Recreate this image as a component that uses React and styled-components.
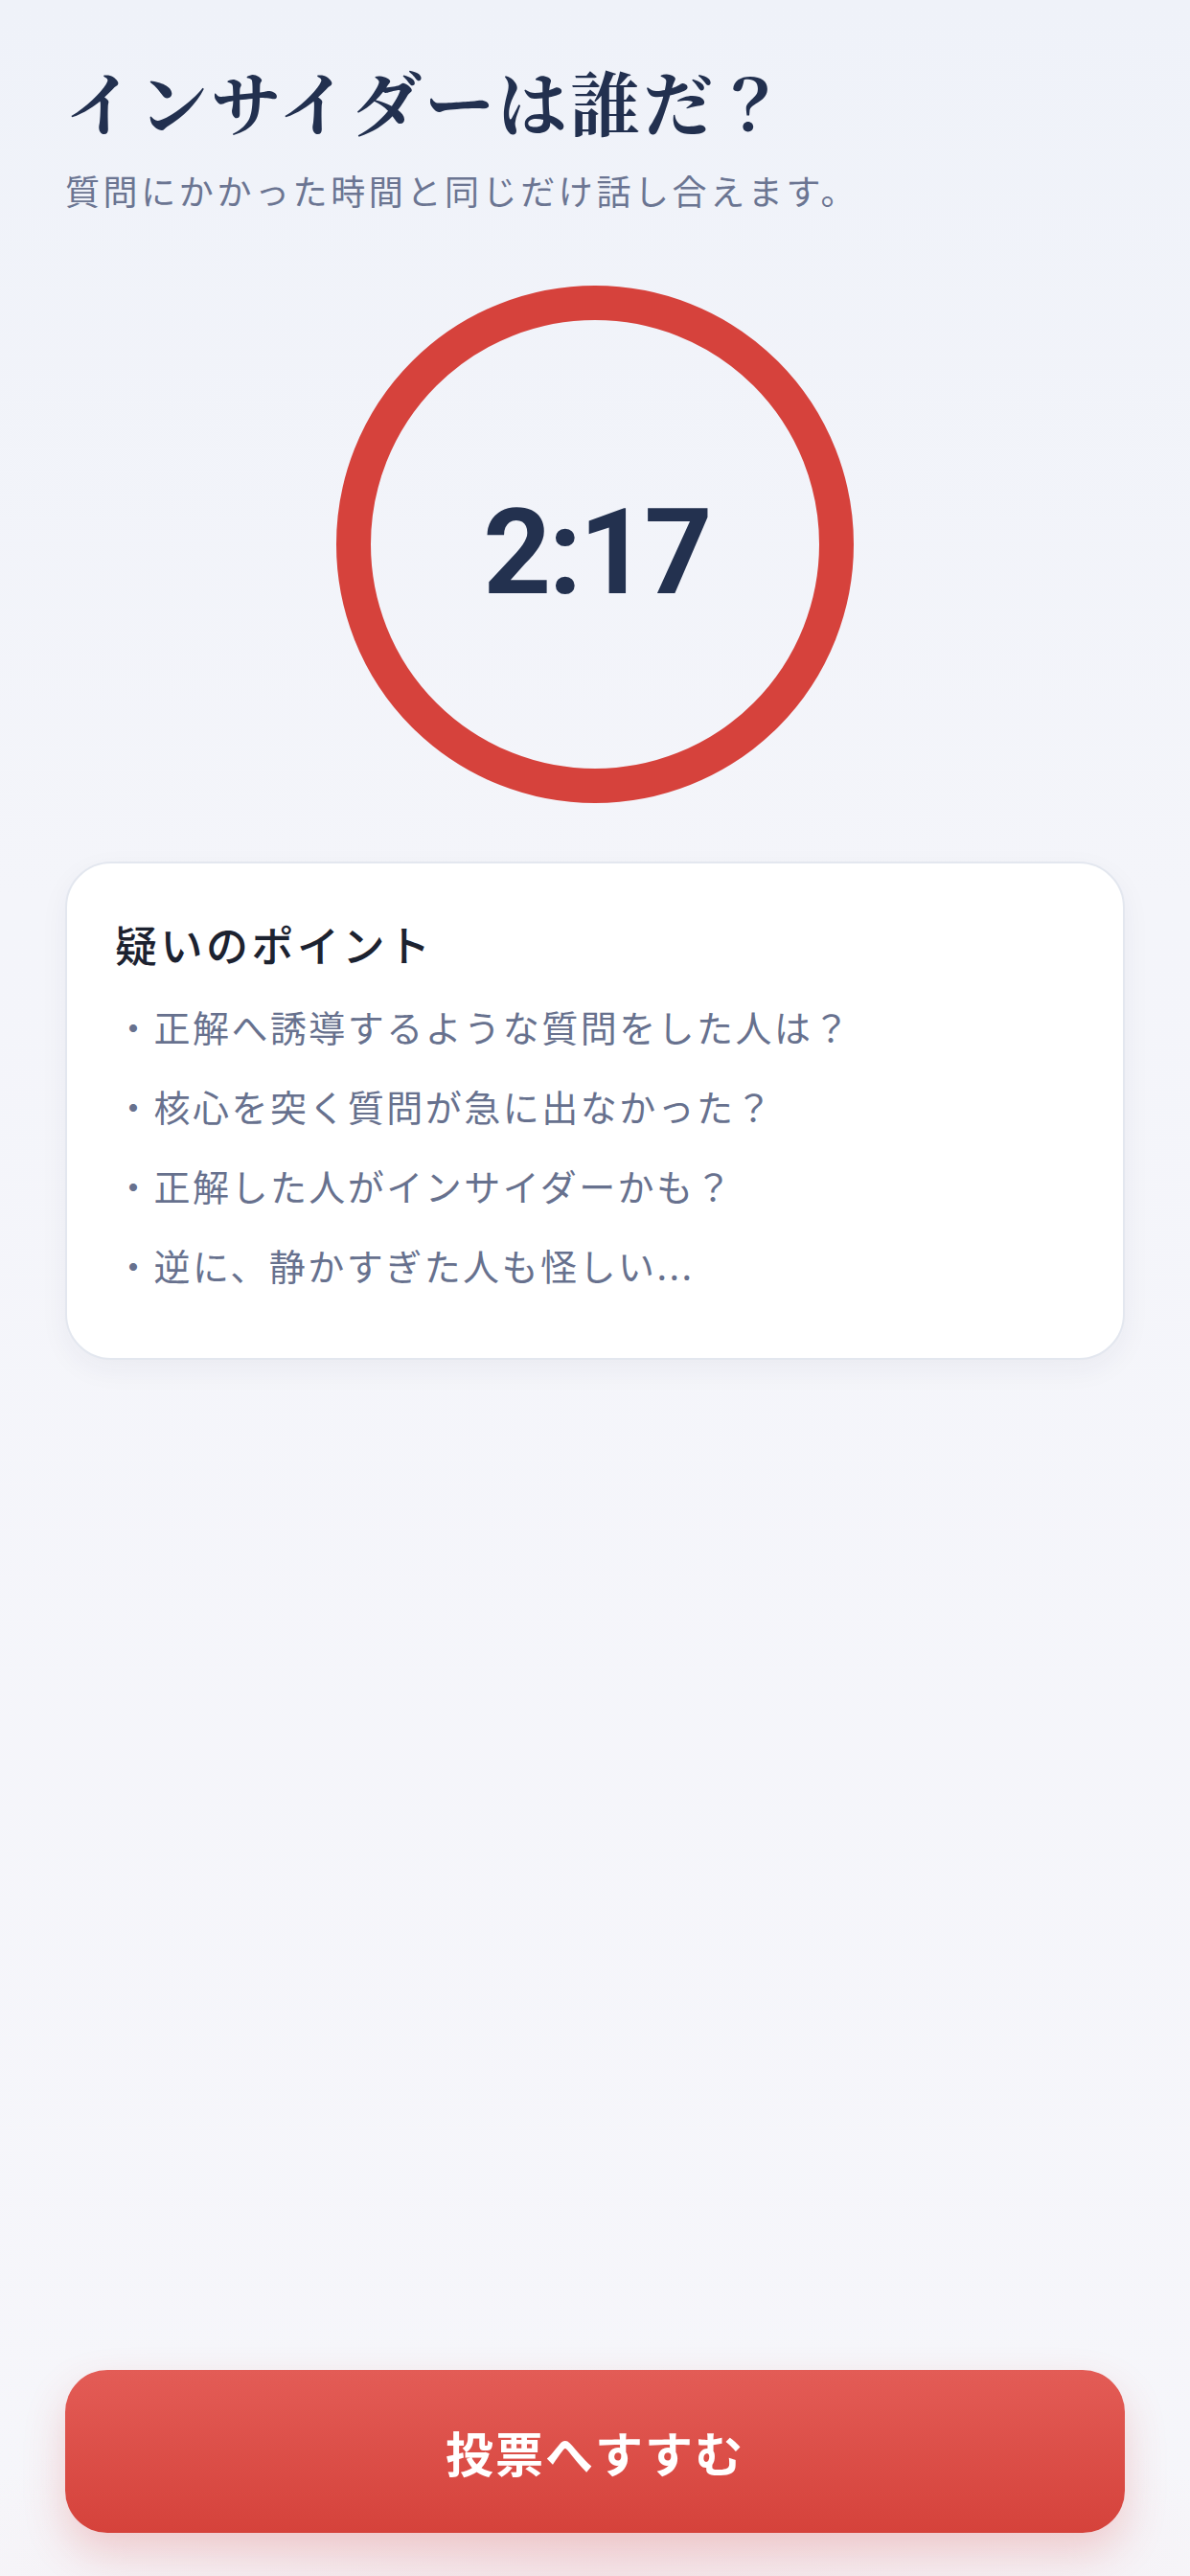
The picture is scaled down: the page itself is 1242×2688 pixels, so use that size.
import styled, { createGlobalStyle } from "styled-components";

const points = [
  "正解へ誘導するような質問をした人は？",
  "核心を突く質問が急に出なかった？",
  "正解した人がインサイダーかも？",
  "逆に、静かすぎた人も怪しい...",
];

function App() {
  return (
    <>
      <GlobalStyle />
      <Page>
        <Header>
          <Title>インサイダーは誰だ？</Title>
          <Subtitle>質問にかかった時間と同じだけ話し合えます。</Subtitle>
        </Header>
        <TimerRing>
          <TimerText>2:17</TimerText>
        </TimerRing>
        <HintCard>
          <HintTitle>疑いのポイント</HintTitle>
          <HintList>
            {points.map((p) => (
              <HintItem key={p}>
                <Bullet>・</Bullet>
                {p}
              </HintItem>
            ))}
          </HintList>
        </HintCard>
        <NextButton>投票へすすむ</NextButton>
      </Page>
    </>
  );
}

const GlobalStyle = createGlobalStyle`
  html, body {
    margin: 0;
    padding: 0;
  }
  body {
    font-family: "Noto Sans CJK JP", "Noto Sans", sans-serif;
    background: #f5f6fa;
  }
`;

const Page = styled.div`
  box-sizing: border-box;
  min-height: 100vh;
  display: flex;
  flex-direction: column;
  padding: 58px 68px 45px;
  background: radial-gradient(
      ellipse 700px 220px at 50% 100%,
      rgba(240, 200, 205, 0.35),
      rgba(245, 246, 250, 0) 100%
    ),
    linear-gradient(180deg, #eff2f9 0%, #f4f5fa 35%, #f6f6fa 100%);
`;

const Header = styled.div`
  display: flex;
  flex-direction: column;
  gap: 18px;
`;

const Title = styled.h1`
  margin: 0;
  font-family: "Noto Serif CJK JP", "Noto Serif JP", "Noto Sans CJK JP", serif;
  font-size: 73px;
  font-weight: 700;
  line-height: 1.3;
  letter-spacing: 3px;
  color: #22304f;
`;

const Subtitle = styled.p`
  margin: 0;
  font-size: 36px;
  line-height: 1.5;
  letter-spacing: 0.1em;
  color: #6b7592;
`;

const TimerRing = styled.div`
  box-sizing: border-box;
  align-self: center;
  width: 540px;
  height: 540px;
  margin-top: 73px;
  border: 36px solid #d6423c;
  border-radius: 50%;
  display: flex;
  align-items: center;
  justify-content: center;
`;

const TimerText = styled.span`
  font-family: Roboto, "Noto Sans", sans-serif;
  font-size: 124px;
  font-weight: 700;
  line-height: 1;
  letter-spacing: -3px;
  color: #23314f;
  margin-top: 18px;
  margin-right: -3px;
`;

const HintCard = styled.section`
  box-sizing: border-box;
  margin-top: 61px;
  padding: 54px 50px 66px;
  background: #ffffff;
  border: 2px solid #e3e7ef;
  border-radius: 48px;
  box-shadow: 0 10px 30px rgba(30, 40, 70, 0.05);
`;

const HintTitle = styled.h2`
  margin: 0;
  font-size: 44px;
  font-weight: 500;
  line-height: 1.4;
  letter-spacing: 0.08em;
  color: #1c2230;
`;

const HintList = styled.ul`
  list-style: none;
  margin: 25px 0 0;
  padding: 0;
  display: flex;
  flex-direction: column;
  gap: 22px;
`;

const HintItem = styled.li`
  font-size: 38px;
  line-height: 1.6;
  letter-spacing: 0.065em;
  color: #67718e;
`;

const Bullet = styled.span`
  color: #67718e;
`;

const NextButton = styled.button`
  margin-top: auto;
  height: 170px;
  width: 100%;
  border: none;
  border-radius: 44px;
  background: linear-gradient(180deg, #e35c56 0%, #d5423b 100%);
  box-shadow: 0 20px 44px rgba(214, 66, 59, 0.22);
  color: #ffffff;
  font-family: "Noto Sans CJK JP", sans-serif;
  font-size: 50px;
  font-weight: 700;
  letter-spacing: 0.04em;
  cursor: pointer;
`;

export default App;
